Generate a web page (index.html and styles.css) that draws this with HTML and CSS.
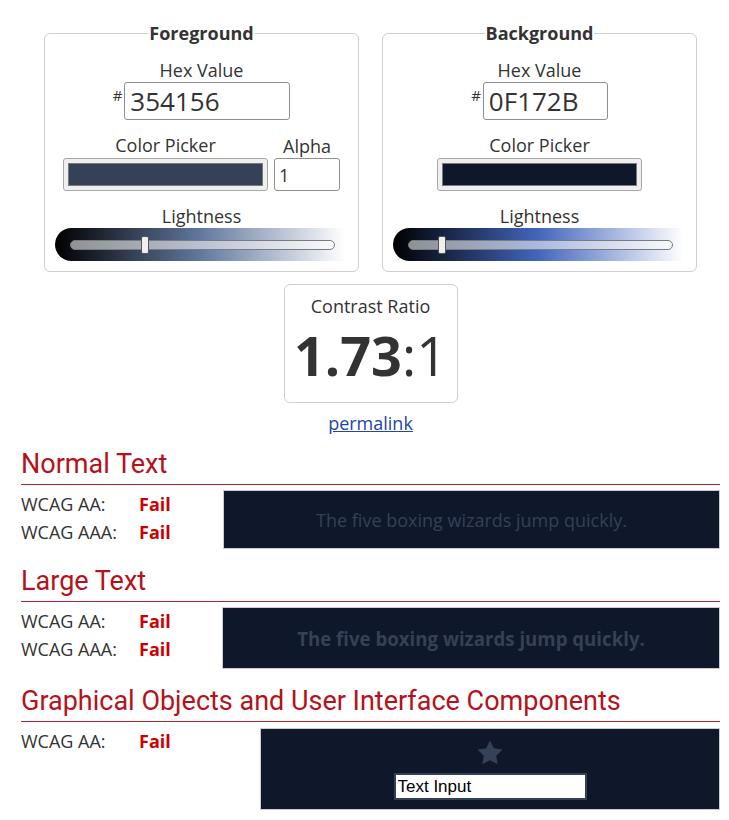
FILE: index.html
```html
<!DOCTYPE html>
<html lang="en">
<head>
<meta charset="utf-8">
<title>Contrast Checker</title>
<link rel="stylesheet" href="styles.css">
</head>
<body>
<main class="page">
  <div class="pickers">
    <fieldset class="panel">
      <legend>Foreground</legend>
      <div class="field-label first">Hex Value</div>
      <div class="hex-row"><span class="hash">#</span><input type="text" class="hex-input hex-fg" value="354156"></div>
      <div class="picker-row">
        <div class="picker-col">
          <div class="field-label">Color Picker</div>
          <div class="swatch-btn"><span class="swatch swatch-fg"></span></div>
        </div>
        <div class="picker-col">
          <div class="field-label">Alpha</div>
          <input type="text" class="alpha-input" value="1">
        </div>
      </div>
      <div class="field-label light-label">Lightness</div>
      <div class="lightness lightness-fg">
        <div class="track"><div class="rail"><span class="thumb" style="left:27.3%"></span></div></div>
      </div>
    </fieldset>
    <fieldset class="panel">
      <legend>Background</legend>
      <div class="field-label first">Hex Value</div>
      <div class="hex-row"><span class="hash">#</span><input type="text" class="hex-input hex-bg" value="0F172B"></div>
      <div class="picker-row">
        <div class="picker-col">
          <div class="field-label">Color Picker</div>
          <div class="swatch-btn"><span class="swatch swatch-bg"></span></div>
        </div>
      </div>
      <div class="field-label light-label">Lightness</div>
      <div class="lightness lightness-bg">
        <div class="track"><div class="rail"><span class="thumb" style="left:11.4%"></span></div></div>
      </div>
    </fieldset>
  </div>

  <div class="ratio-box">
    <div class="ratio-label">Contrast Ratio</div>
    <div class="ratio-value"><strong>1.73</strong>:1</div>
  </div>
  <div class="permalink-row"><a href="#" class="permalink">permalink</a></div>

  <section class="result">
    <h2 class="result-title">Normal Text</h2>
    <div class="result-grid grid-normal">
      <div class="level">WCAG AA:</div><div class="fail">Fail</div>
      <div class="sample sample-normal">The five boxing wizards jump quickly.</div>
      <div class="level">WCAG AAA:</div><div class="fail">Fail</div>
    </div>
  </section>

  <section class="result">
    <h2 class="result-title">Large Text</h2>
    <div class="result-grid grid-large">
      <div class="level">WCAG AA:</div><div class="fail">Fail</div>
      <div class="sample sample-large">The five boxing wizards jump quickly.</div>
      <div class="level">WCAG AAA:</div><div class="fail">Fail</div>
    </div>
  </section>

  <section class="result">
    <h2 class="result-title">Graphical Objects and User Interface Components</h2>
    <div class="result-grid grid-ui">
      <div class="level">WCAG AA:</div><div class="fail">Fail</div>
      <div class="sample sample-ui">
        <svg class="star" viewBox="0 0 24 24" width="30" height="30" aria-hidden="true"><path d="M12 2l3.09 6.26L22 9.27l-5 4.87 1.18 6.88L12 17.77l-6.18 3.25L7 14.14 2 9.27l6.91-1.01L12 2z"/></svg>
        <input type="text" class="ui-input" value="Text Input">
      </div>
    </div>
  </section>
</main>
</body>
</html>
```

FILE: styles.css
```css
* { box-sizing: border-box; }

body {
  margin: 0;
  background: #fff;
  color: #333;
  font-family: "Open Sans", "Noto Sans", sans-serif;
  font-size: 18px;
}

.page {
  margin: 0 9px 0 21px;
  padding-top: 22px;
}

.pickers {
  display: flex;
  justify-content: center;
  gap: 23px;
}

.panel {
  width: 315px;
  min-width: 0;
  margin: 0;
  padding: 0 10px 10px;
  border: 1px solid #cfcfcf;
  border-radius: 6px;
  display: flex;
  flex-direction: column;
  align-items: center;
}

.panel legend {
  margin: 0 auto;
  padding: 0 1px;
  font-weight: 700;
  font-size: 18px;
  line-height: 22px;
  color: #333;
}

.field-label {
  font-size: 18px;
  line-height: 23px;
  text-align: center;
  color: #333;
}

.field-label.first { margin-top: 15px; }

.hex-row {
  display: flex;
  align-items: flex-start;
  gap: 2px;
}

.hash {
  font-size: 15px;
  line-height: 1;
  margin-top: 6px;
}

.hex-input {
  height: 38px;
  border: 1px solid #8f8f8f;
  border-radius: 3px;
  padding: 0 0 0 5px;
  font-family: "Open Sans", sans-serif;
  font-size: 26px;
  color: #333;
  background: #fff;
}

.hex-fg { width: 166px; }
.hex-bg { width: 125px; }

.picker-row {
  display: flex;
  align-items: flex-end;
  gap: 6px;
  margin-top: 14px;
}

.picker-col {
  display: flex;
  flex-direction: column;
  align-items: center;
}

.swatch-btn {
  width: 205px;
  height: 33px;
  margin-top: 1px;
  padding: 4px;
  background: #efefef;
  border: 1px solid #a8a8a8;
  border-radius: 3px;
  display: flex;
}

.swatch {
  flex: 1;
  border: 1px solid #7a7a7a;
}

.swatch-fg { background: #354156; }
.swatch-bg { background: #0F172B; }

.alpha-input {
  width: 66px;
  height: 33px;
  border: 1px solid #8f8f8f;
  border-radius: 3px;
  padding: 0 0 0 4px;
  font-family: "Open Sans", sans-serif;
  font-size: 18px;
  color: #333;
  background: #fff;
}

.light-label { margin-top: 14px; }

.lightness {
  align-self: flex-start;
  width: 290px;
  height: 33px;
  border-radius: 17px 0 0 17px;
  padding: 0 10px 0 15px;
  display: flex;
  align-items: center;
}

.lightness-fg {
  background: linear-gradient(to right, hsl(218, 24%, 0%), hsl(218, 24%, 50%), hsl(218, 24%, 100%));
}

.lightness-bg {
  background: linear-gradient(to right, hsl(223, 48%, 0%), hsl(223, 48%, 50%), hsl(223, 48%, 100%));
}

.track {
  flex: 1;
  height: 10px;
  border: 1px solid #7b7b7b;
  border-radius: 5px;
  background: rgba(255, 255, 255, 0.55);
}

.rail {
  position: relative;
  height: 100%;
  margin: 0 4px;
}

.thumb {
  position: absolute;
  top: -5px;
  width: 8px;
  height: 18px;
  transform: translateX(-50%);
  background: #efefef;
  border: 1px solid #555;
  border-radius: 2px;
}

.ratio-box {
  width: 174px;
  height: 119px;
  margin: 12px auto 0;
  border: 1px solid #cfcfcf;
  border-radius: 6px;
  padding-top: 10px;
  text-align: center;
}

.ratio-label {
  font-size: 18px;
  line-height: 23px;
}

.ratio-value {
  margin-top: 5px;
  font-size: 54px;
  line-height: 64px;
  font-weight: 400;
  color: #333;
}

.ratio-value strong { font-weight: 700; }

.permalink-row {
  margin-top: 8px;
  text-align: center;
  line-height: 24px;
}

.permalink {
  color: #2445a8;
  text-decoration: underline;
}

.result { margin-top: 17px; }

.permalink-row + .result { margin-top: 14px; }

.result-title {
  margin: 0;
  padding-bottom: 5px;
  border-bottom: 1px solid #b3202e;
  font-family: Roboto, "Liberation Sans", sans-serif;
  font-weight: 400;
  font-size: 27px;
  line-height: 30px;
  color: #b5121b;
}

.result-grid {
  display: grid;
  grid-template-rows: 28px minmax(28px, auto);
  margin-top: 5px;
}

.grid-normal { grid-template-columns: 118px 84px 1fr; }
.grid-large { grid-template-columns: 118px 83px 1fr; }
.grid-ui { grid-template-columns: 118px 121px 1fr; }

.level, .fail {
  line-height: 28px;
  font-size: 18px;
}

.fail {
  color: #c00;
  font-weight: 700;
}

.sample {
  grid-column: 3;
  grid-row: 1 / span 2;
  background: #0F172B;
  border: 1px solid #c9cdd2;
  color: #354156;
  display: flex;
  align-items: center;
  justify-content: center;
}

.sample-normal { height: 59px; font-size: 18px; }
.sample-large { height: 62px; font-size: 18.67px; font-weight: 700; }

.sample-ui {
  height: 82px;
  margin-top: 1px;
  flex-direction: column;
  justify-content: flex-start;
}

.star {
  fill: #354156;
  margin-top: 9px;
}

.ui-input {
  width: 193px;
  height: 27px;
  margin-top: 5px;
  border: 2px solid #354156;
  background: #fff;
  padding: 0 2px;
  font-family: "Liberation Sans", Arial, sans-serif;
  font-size: 17px;
  color: #000;
}
```
